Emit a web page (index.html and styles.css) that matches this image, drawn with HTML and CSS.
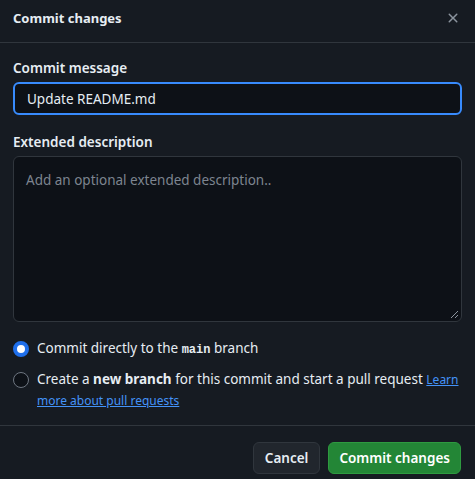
FILE: index.html
```html
<!DOCTYPE html>
<html>
<head>
<meta charset="utf-8">
<link rel="stylesheet" href="styles.css">
</head>
<body>
<div class="dialog">
  <header class="header">
    <h1 class="title">Commit changes</h1>
    <button class="close" aria-label="Close">
      <svg width="16" height="16" viewBox="0 0 16 16"><path fill="currentColor" d="M3.72 3.72a.75.75 0 0 1 1.06 0L8 6.94l3.22-3.22a.749.749 0 0 1 1.275.326.749.749 0 0 1-.215.734L9.06 8l3.22 3.22a.749.749 0 0 1-.326 1.275.749.749 0 0 1-.734-.215L8 9.06l-3.22 3.22a.751.751 0 0 1-1.042-.018.751.751 0 0 1-.018-1.042L6.94 8 3.72 4.78a.75.75 0 0 1 0-1.06Z"/></svg>
    </button>
  </header>
  <div class="body">
    <label class="label">Commit message</label>
    <div class="input">Update README.md</div>
    <label class="label label2">Extended description</label>
    <div class="textarea">
      <span class="placeholder">Add an optional extended description..</span>
      <svg class="grip" width="10" height="10" viewBox="0 0 10 10"><path d="M9 2 L2 9 M9 6 L6 9" stroke="#8b949e" stroke-width="1"/></svg>
    </div>
    <div class="options">
      <div class="option">
        <span class="radio checked"></span>
        <span class="otext">Commit directly to the <code>main</code> branch</span>
      </div>
      <div class="option">
        <span class="radio"></span>
        <span class="otext">Create a <b>new branch</b> for this commit and start a pull request <a href="#">Learn more about pull requests</a></span>
      </div>
    </div>
  </div>
  <footer class="footer">
    <button class="btn">Cancel</button>
    <button class="btn primary">Commit changes</button>
  </footer>
</div>
</body>
</html>
```

FILE: styles.css
```css
html, body {
  margin: 0;
  padding: 0;
  background: #161b22;
}
body {
  font-family: "Noto Sans", "Open Sans", sans-serif;
  color: #e6edf3;
  font-size: 13px;
}
.dialog {
  width: 475px;
  height: 479px;
  display: flex;
  flex-direction: column;
  overflow: hidden;
}
.header {
  height: 43px;
  flex: none;
  box-sizing: border-box;
  border-bottom: 1px solid #30363d;
  display: flex;
  align-items: center;
  justify-content: space-between;
  padding: 0 14px 6px 13px;
}
.title {
  margin: 0;
  font-size: 13px;
  font-weight: 700;
  line-height: 20px;
}
.close {
  background: none;
  border: 0;
  padding: 0;
  color: #8b949e;
  display: flex;
  width: 16px;
  height: 16px;
}
.body {
  padding: 15px 13px 0 13px;
  flex: none;
  height: 382px;
  box-sizing: border-box;
}
.label {
  display: block;
  font-weight: 600;
  font-size: 13.5px;
  line-height: 20px;
}
.label2 { margin-top: 17px; }
.input {
  margin-top: 4px;
  height: 33px;
  box-sizing: border-box;
  border: 2px solid #388bfd;
  border-radius: 6px;
  background: #0d1117;
  padding: 0 12px;
  display: flex;
  align-items: center;
  font-size: 13.5px;
}
.textarea {
  position: relative;
  margin-top: 4px;
  height: 166px;
  box-sizing: border-box;
  border: 1px solid #30363d;
  border-radius: 6px;
  background: #0d1117;
  padding: 13px 12px;
  line-height: 20px;
  font-size: 13.5px;
}
.placeholder { color: #7d8590; }
.grip {
  position: absolute;
  right: 2px;
  bottom: 2px;
}
.options {
  margin-top: 16px;
  display: flex;
  flex-direction: column;
  gap: 8px;
}
.option {
  display: flex;
  align-items: flex-start;
  gap: 8px;
  line-height: 21px;
  font-size: 13.5px;
}
.radio {
  flex: none;
  width: 16px;
  height: 16px;
  box-sizing: border-box;
  border-radius: 50%;
  border: 1px solid #6e7681;
  background: #0d1117;
  margin-top: 3px;
}
.radio.checked {
  border: 4px solid #1f6feb;
  background: #ffffff;
}
.otext { color: #e6edf3; }
code {
  font-family: "Liberation Mono", monospace;
  font-size: 12px;
  font-weight: 600;
}
b { font-weight: 700; }
a {
  color: #4493f8;
  text-decoration: underline;
  font-size: 12px;
}
.footer {
  border-top: 1px solid #30363d;
  flex: none;
  display: flex;
  justify-content: flex-end;
  align-items: flex-start;
  gap: 8px;
  padding: 16px 14px 0 0;
}
.btn {
  height: 32px;
  border-radius: 6px;
  border: 1px solid #30363d;
  background: #21262d;
  color: #e6edf3;
  font-family: inherit;
  font-size: 13.5px;
  font-weight: 600;
  padding: 0 11px;
}
.btn.primary {
  background: #238636;
  border-color: #2e9a40;
  color: #ffffff;
  padding: 0 10px;
}
```
